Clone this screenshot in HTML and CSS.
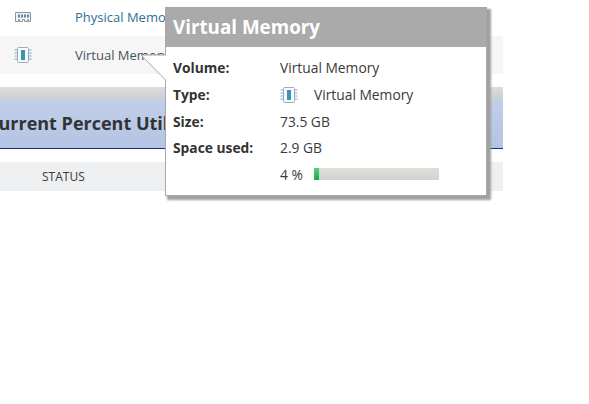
FILE: index.html
```html
<!DOCTYPE html>
<html lang="en">
<head>
<meta charset="utf-8">
<title>Virtual Memory</title>
<link rel="stylesheet" href="styles.css">
</head>
<body>
<div class="page">
  <div class="row row-plain">
    <svg class="icon-cell" width="18" height="12" viewBox="0 0 18 12">
      <path d="M1.500 1.500h15v9h-2v-2h-1v2h-3v-2h-2v2h-3v-2h-1v2h-3z" fill="#f3f3f3" stroke="#8d9499"/>
      <path d="M4 3.500h2v3h-2zM7 3.500h2v3h-2zM10 3.500h2v3h-2zM13 3.500h2v3h-2z" fill="#4a8fb0"/>
    </svg>
    <a class="link">Physical Memory</a>
  </div>
  <div class="row row-alt">
    <svg class="icon-cell" width="18" height="18" viewBox="0 0 18 18">
      <use href="#chip"/>
    </svg>
    <span class="name">Virtual Memory</span>
  </div>
  <div class="section">
    <h2 class="section-title">Current Percent Utilization</h2>
  </div>
  <div class="thead">STATUS</div>
</div>

<svg class="defs" width="0" height="0">
  <symbol id="chip" viewBox="0 0 18 18">
    <rect x="3.500" y="1.500" width="11" height="15" rx="1" fill="#fafafa" stroke="#a3abb0"/>
    <rect x="7" y="4" width="4" height="10" fill="#3b93b8"/>
    <path d="M0.500 4h3M0.500 7h3M0.500 10h3M0.500 13h3M14.500 4h3M14.500 7h3M14.500 10h3M14.500 13h3" stroke="#6db3cf" stroke-width="1.200"/>
  </symbol>
</svg>

<svg class="pointer" width="27" height="28" viewBox="0 0 27 28">
  <path d="M26 1H1L26 26.500" fill="#fff" stroke="#a6a6a6"/>
</svg>

<div class="tip">
  <div class="tip-head">Virtual Memory</div>
  <div class="tip-body">
    <div class="tip-label">Volume:</div><div>Virtual Memory</div>
    <div class="tip-label">Type:</div>
    <div class="tip-type">
      <svg class="tip-chip" width="18" height="18" viewBox="0 0 18 18"><use href="#chip"/></svg>
      <span>Virtual Memory</span>
    </div>
    <div class="tip-label">Size:</div><div>73.5 GB</div>
    <div class="tip-label">Space used:</div><div>2.9 GB</div>
    <div></div>
    <div class="tip-usage">
      <span class="pct">4 %</span>
      <div class="bar"><div class="bar-fill" style="width:4%"></div></div>
    </div>
  </div>
</div>
</body>
</html>
```

FILE: styles.css
```css
* { box-sizing: border-box; }
html, body { margin: 0; padding: 0; height: 404px; overflow: hidden; background: #fff; }
body { font-family: "Open Sans", "Liberation Sans", sans-serif; font-size: 13px; color: #3a3a3a; position: relative; }
.page { width: 503px; overflow: hidden; }
.row { display: flex; align-items: center; }
.row-plain { height: 36px; padding-bottom: 2px; }
.row-alt { height: 38px; background: #f6f6f6; }
.icon-cell { margin-left: 14px; flex: none; }
.row .icon-cell { margin-right: 43px; }
.link { color: #2f6f92; }
.name { color: #46525c; }
.section {
  margin-top: 13px;
  height: 62px;
  padding-top: 12px;
  background: linear-gradient(#dcdcdc 0, #cfcfcf 12px, #c2cfea 12px, #b4c4e2 100%);
  border-bottom: 1px solid #1c2a80;
  overflow: hidden;
}
.section-title { margin: 0 0 0 -13px; font-size: 18px; line-height: 48px; font-weight: 700; color: #333; white-space: nowrap; }
.thead { margin-top: 13px; height: 29px; line-height: 29px; background: #eeeff0; padding-left: 42px; font-size: 12px; color: #3a3a3a; }
.defs { position: absolute; }
.pointer { position: absolute; left: 140px; top: 54px; z-index: 2; }
.tip {
  position: absolute; left: 165px; top: 7px; width: 322px; height: 189px;
  background: #fff; border: 1px solid #a8a8a8; box-shadow: 3px 3px 2px 1px #a0a0a0;
  z-index: 1;
}
.tip-head { height: 39px; line-height: 38px; background: #aaa; color: #fff; font-size: 18.8px; font-weight: 700; padding-left: 7px; }
.tip-body { display: grid; grid-template-columns: 107px 1fr; grid-template-rows: 27px 27px 27px 25px 28px; padding: 7px 0 0 7px; align-items: center; font-size: 13.8px; }
.tip-label { font-weight: 700; color: #333; }
.tip-type { display: flex; align-items: center; gap: 16px; }
.tip-chip { flex: none; }
.tip-usage { display: flex; align-items: center; gap: 11px; }
.pct { width: 23px; flex: none; white-space: nowrap; }
.bar { width: 125px; height: 12px; background: linear-gradient(#dededa, #d2d2ce); }
.bar-fill { height: 100%; background: linear-gradient(#5ccf80, #17a84a); }
```
